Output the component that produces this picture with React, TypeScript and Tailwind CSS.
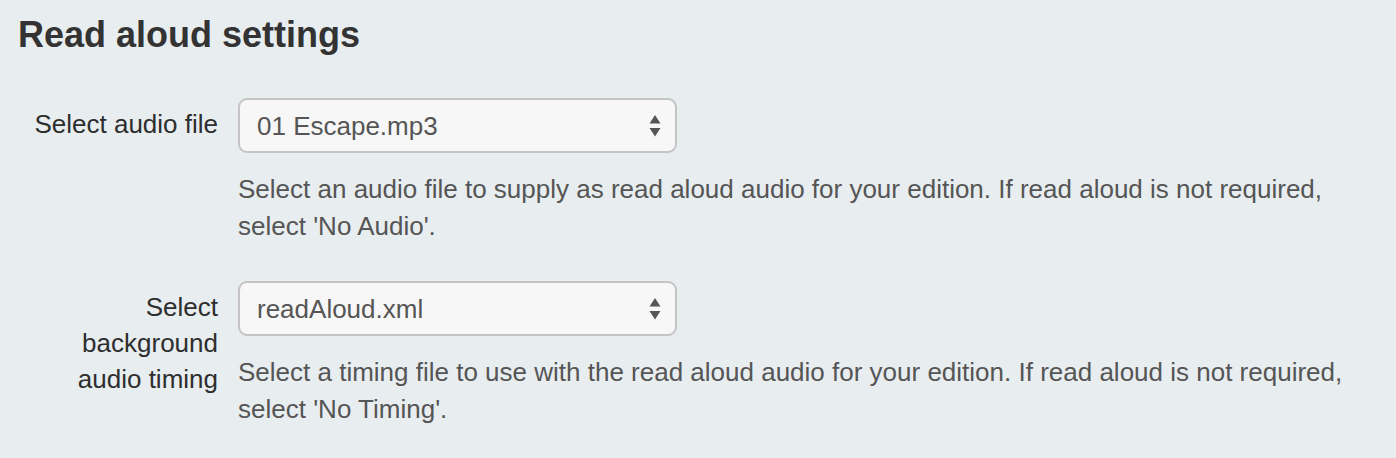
const rows = [
  {
    label: 'Select audio file',
    value: '01 Escape.mp3',
    help: "Select an audio file to supply as read aloud audio for your edition. If read aloud is not required, select 'No Audio'.",
  },
  {
    label: 'Select background audio timing',
    value: 'readAloud.xml',
    help: "Select a timing file to use with the read aloud audio for your edition. If read aloud is not required, select 'No Timing'.",
  },
];

function SelectArrows() {
  return (
    <svg width="12" height="22" viewBox="0 0 12 22" className="shrink-0">
      <path d="M6 0 L11.5 8.5 H0.5 Z" fill="#555" />
      <path d="M6 21.5 L11.5 13 H0.5 Z" fill="#555" />
    </svg>
  );
}

export default function App() {
  return (
    <div
      className="min-h-[458px] w-full bg-[#e8edf0] px-[18px] pt-[15px] text-[#333]"
      style={{ fontFamily: '"Liberation Sans", Arial, Helvetica, sans-serif' }}
    >
      <h1 className="text-[36px] leading-[40px] font-bold text-[#333]">
        Read aloud settings
      </h1>

      <div className="mt-[43px] flex flex-col gap-[37px]">
        {rows.map((row) => (
          <div key={row.label} className="flex gap-[20px]">
            <label className="w-[200px] shrink-0 pt-[8px] text-right text-[26px] leading-[36px] text-[#2e2e2e]">
              {row.label}
            </label>
            <div className="flex-1">
              <div className="flex h-[55px] w-[439px] items-center justify-between rounded-[9px] border-2 border-[#c4c4c4] bg-[#f7f7f7] pl-[17px] pr-[14px]">
                <span className="text-[26px] leading-[36px] text-[#555]">
                  {row.value}
                </span>
                <SelectArrows />
              </div>
              <p className="mt-[18px] max-w-[1138px] text-[26px] leading-[36.5px] text-[#555]">
                {row.help}
              </p>
            </div>
          </div>
        ))}
      </div>
    </div>
  );
}
